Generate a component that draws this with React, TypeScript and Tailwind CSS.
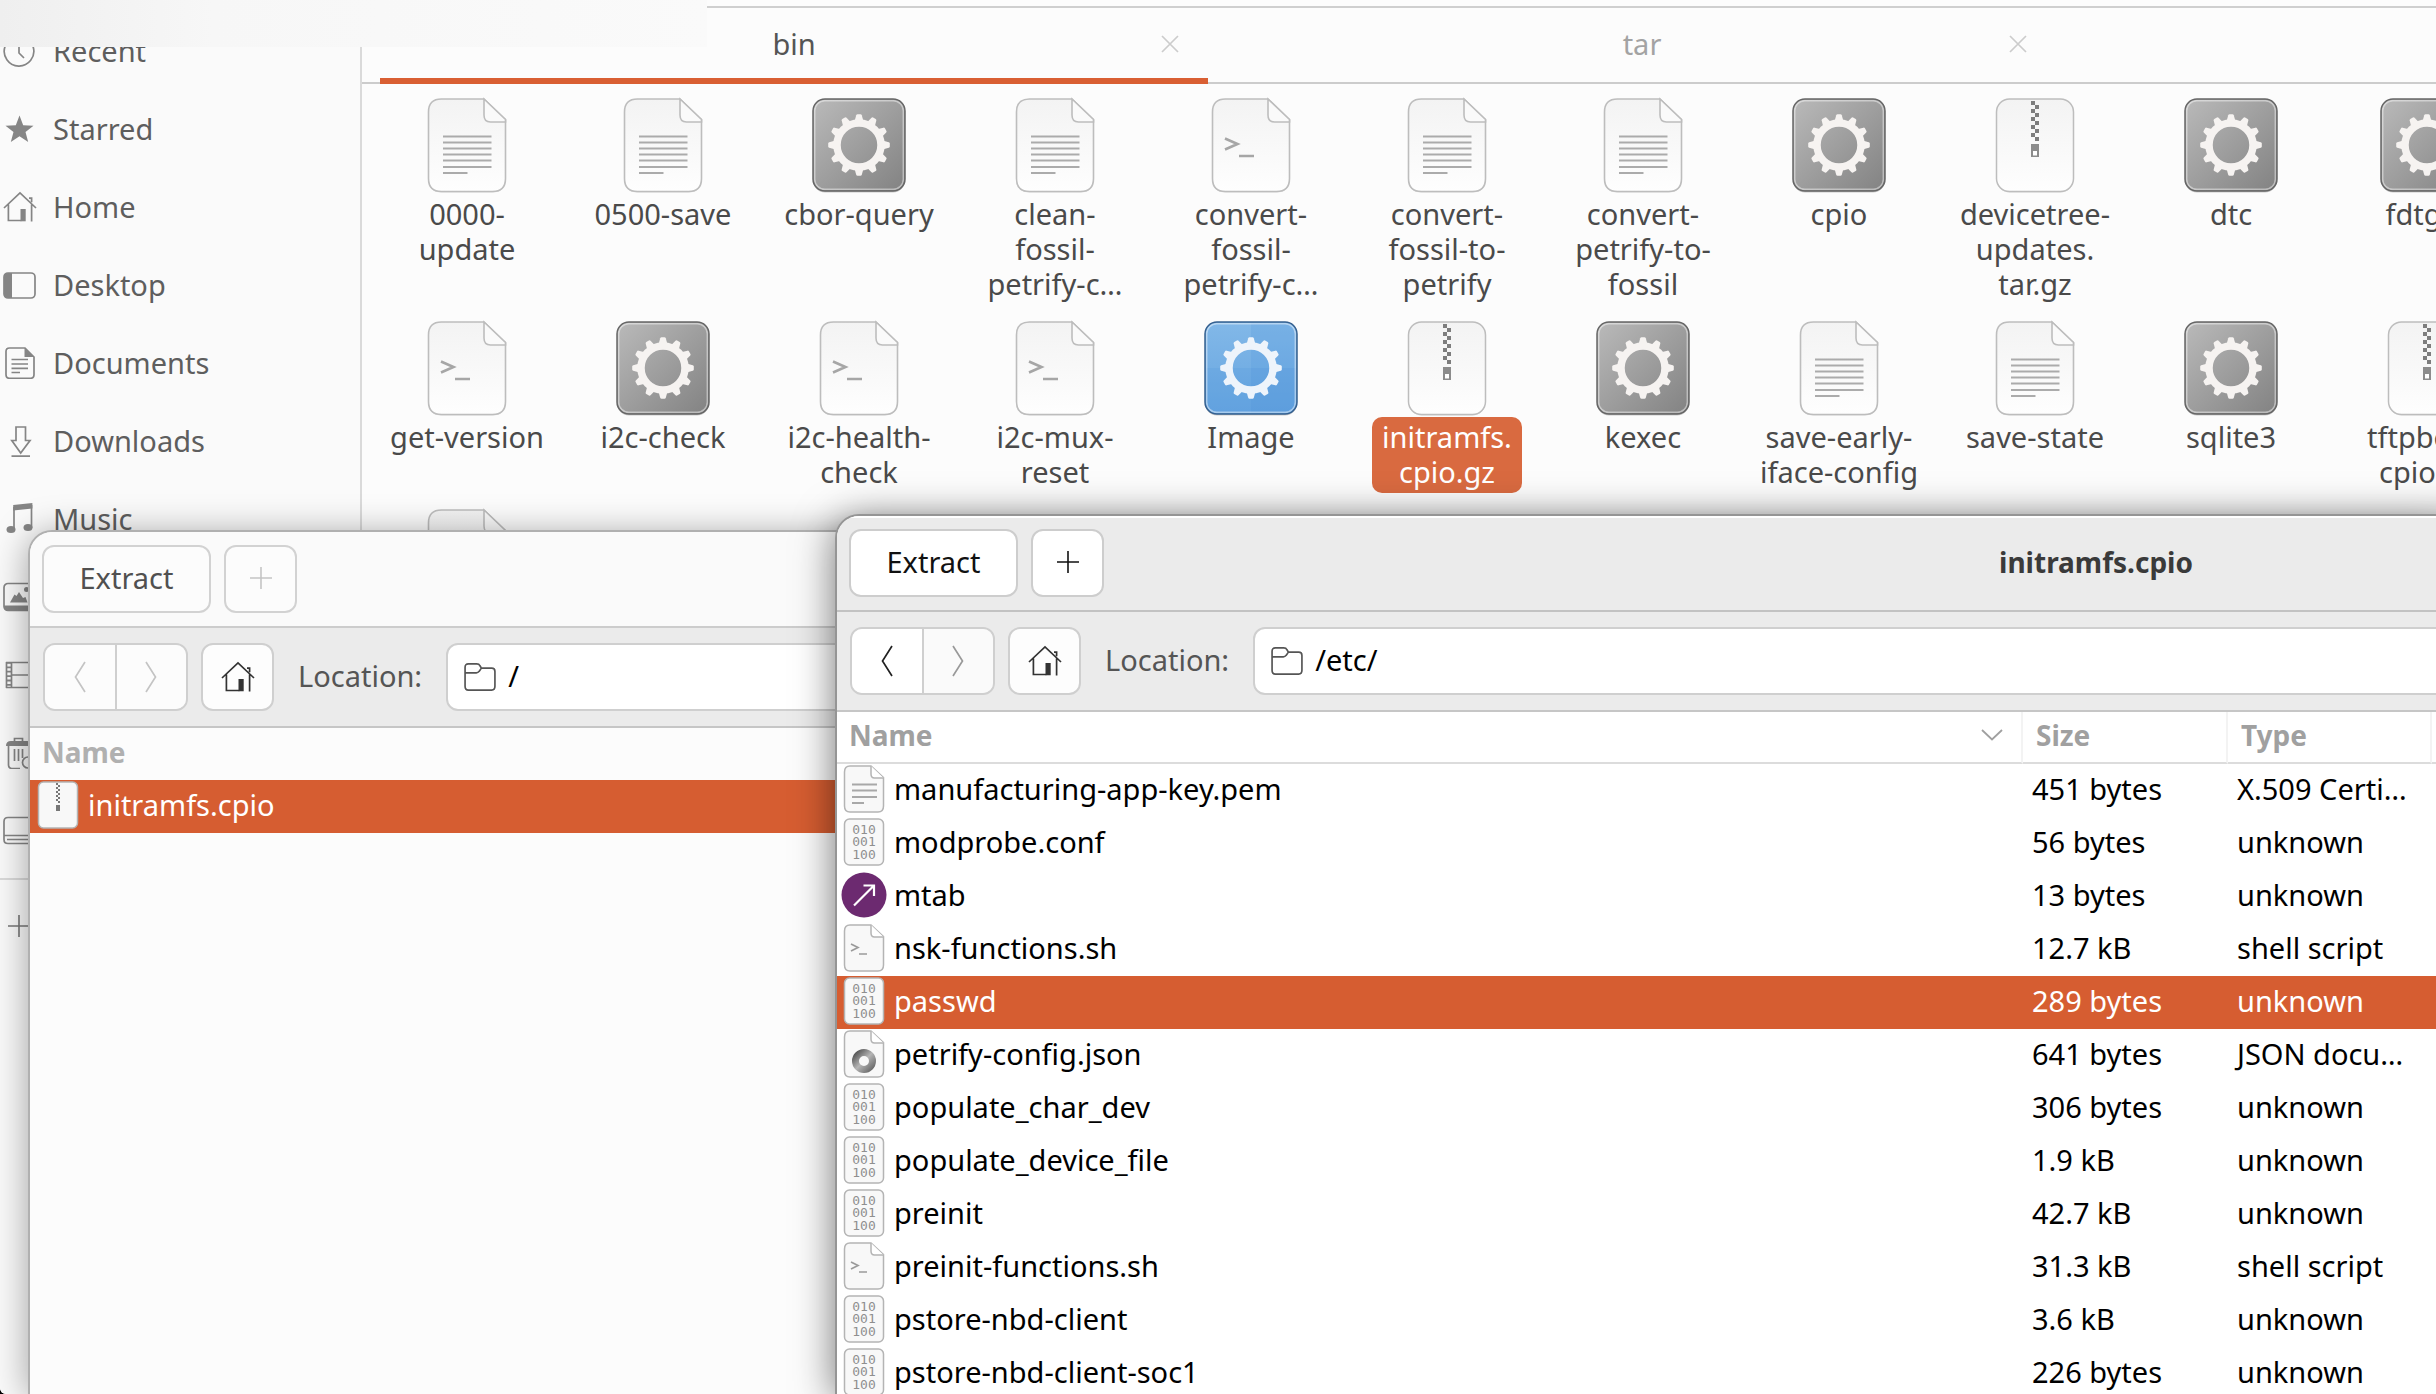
import React from 'react';

type Kind = 'text' | 'shell' | 'zip' | 'exec' | 'image' | 'binary' | 'link' | 'json';

const tiles: { kind: Kind; label: string; selected?: boolean }[] = [
  { kind: 'text', label: '0000-\nupdate' },
  { kind: 'text', label: '0500-save' },
  { kind: 'exec', label: 'cbor-query' },
  { kind: 'text', label: 'clean-\nfossil-\npetrify-c…' },
  { kind: 'shell', label: 'convert-\nfossil-\npetrify-c…' },
  { kind: 'text', label: 'convert-\nfossil-to-\npetrify' },
  { kind: 'text', label: 'convert-\npetrify-to-\nfossil' },
  { kind: 'exec', label: 'cpio' },
  { kind: 'zip', label: 'devicetree-\nupdates.\ntar.gz' },
  { kind: 'exec', label: 'dtc' },
  { kind: 'exec', label: 'fdtget' },
  { kind: 'shell', label: 'get-version' },
  { kind: 'exec', label: 'i2c-check' },
  { kind: 'shell', label: 'i2c-health-\ncheck' },
  { kind: 'shell', label: 'i2c-mux-\nreset' },
  { kind: 'image', label: 'Image' },
  { kind: 'zip', label: 'initramfs.\ncpio.gz', selected: true },
  { kind: 'exec', label: 'kexec' },
  { kind: 'text', label: 'save-early-\niface-config' },
  { kind: 'text', label: 'save-state' },
  { kind: 'exec', label: 'sqlite3' },
  { kind: 'zip', label: 'tftpboot.\ncpio.gz' },
  { kind: 'text', label: '' },
];

const files: { kind: Kind; name: string; size: string; type: string; selected?: boolean }[] = [
  { kind: 'text', name: 'manufacturing-app-key.pem', size: '451 bytes', type: 'X.509 Certi…' },
  { kind: 'binary', name: 'modprobe.conf', size: '56 bytes', type: 'unknown' },
  { kind: 'link', name: 'mtab', size: '13 bytes', type: 'unknown' },
  { kind: 'shell', name: 'nsk-functions.sh', size: '12.7 kB', type: 'shell script' },
  { kind: 'binary', name: 'passwd', size: '289 bytes', type: 'unknown', selected: true },
  { kind: 'json', name: 'petrify-config.json', size: '641 bytes', type: 'JSON docu…' },
  { kind: 'binary', name: 'populate_char_dev', size: '306 bytes', type: 'unknown' },
  { kind: 'binary', name: 'populate_device_file', size: '1.9 kB', type: 'unknown' },
  { kind: 'binary', name: 'preinit', size: '42.7 kB', type: 'unknown' },
  { kind: 'shell', name: 'preinit-functions.sh', size: '31.3 kB', type: 'shell script' },
  { kind: 'binary', name: 'pstore-nbd-client', size: '3.6 kB', type: 'unknown' },
  { kind: 'binary', name: 'pstore-nbd-client-soc1', size: '226 bytes', type: 'unknown' },
];

const HomeIcon = () => (
  <svg viewBox="0 0 34 32" className="h-8 w-[34px] shrink-0" fill="none" stroke="currentColor" strokeWidth="1.7">
    <path d="M1 17 17 1.8 33 17M5.4 13.5v16h13M28.6 13.5V30.4M26 7.2h2.6v4" />
    <path d="M17.5 18h5.2v12.3h-5.2z" fill="currentColor" stroke="none" />
  </svg>
);

const PlusIcon = () => (
  <svg viewBox="0 0 24 24" className="h-6 w-6" stroke="currentColor" strokeWidth="1.6">
    <path d="M1 12h22M12 1v22" />
  </svg>
);

const Chevron = ({ right }: { right?: boolean }) => (
  <svg viewBox="0 0 12 32" className="h-8 w-3" fill="none" stroke="currentColor" strokeWidth="1.7">
    <path d={right ? 'M1 1 10.500 16 1 31' : 'M11 1 1.500 16 11 31'} />
  </svg>
);

const FolderIcon = () => (
  <svg viewBox="0 0 34 30" className="h-7 w-8 shrink-0" fill="none" stroke="currentColor" strokeWidth="1.8">
    <path d="M1 10.500V4.500Q1 1 4.500 1H13.500Q16 1 17 3L18.500 5.500H29.500Q33 5.500 33 9V25Q33 29 29.500 29H4.500Q1 29 1 25ZM1 10.500H13Q15 10.500 16 9L18.500 5.500" />
  </svg>
);

const places: { label: string; shown?: boolean; icon: React.ReactNode }[] = [
  {
    label: 'Recent',
    shown: true,
    icon: <path d="M1 4v7h8M2 11.500A14.800 14.800 0 1 0 8 3.800M16 7v11l5 5" />,
  },
  {
    label: 'Starred',
    shown: true,
    icon: <path d="M16.500 2.500 20.200 12.300 30.500 12.700 22.500 19 25.200 29 16.500 23.300 7.800 29 10.500 19 2.500 12.700 12.800 12.300Z" fill="currentColor" stroke="none" />,
  },
  { label: 'Home', shown: true, icon: null },
  {
    label: 'Desktop',
    shown: true,
    icon: (
      <>
        <rect x="1" y="4" width="31" height="25" rx="4" />
        <path d="M5 4h4v25H5q-4 0-4-4V8q0-4 4-4z" fill="currentColor" stroke="none" />
      </>
    ),
  },
  {
    label: 'Documents',
    shown: true,
    icon: (
      <>
        <path d="M6.500 1H22L31 10V27.500Q31 31.300 27.500 31.300H6.500Q3 31.300 3 27.500V4.500Q3 1 6.500 1Z" />
        <path d="M21.500 1 31 10H21.500Z" fill="currentColor" stroke="none" />
        <path d="M8.500 12.500H25M8.500 17H25M8.500 21.300H25M8.500 25.500H17" />
      </>
    ),
  },
  { label: 'Downloads', shown: true, icon: <path d="M13 2h9.500v13.500H27L17.700 28 8.800 15.500H13ZM8.500 31.200H27" /> },
  {
    label: 'Music',
    shown: true,
    icon: (
      <>
        <path d="M11 26V4M28.500 25V2" />
        <path d="M10.200 2 29.400 0v5.500l-19.200 2z" fill="currentColor" stroke="none" />
        <ellipse cx="8" cy="26.500" rx="4.500" ry="3.500" fill="currentColor" stroke="none" />
        <ellipse cx="25" cy="24.500" rx="4.500" ry="3.500" fill="currentColor" stroke="none" />
      </>
    ),
  },
  {
    label: 'Pictures',
    icon: (
      <>
        <rect x="1" y="2.500" width="32" height="27" rx="4" />
        <path d="M1 24.500h32v2q0 3-4 3H5q-4 0-4-3z" fill="currentColor" stroke="none" />
        <path d="m7 21.500 4.500-8 2 1.500 2.500-4 4 6 2.500-1 2 5.500z" fill="currentColor" stroke="none" />
        <circle cx="23.500" cy="8.500" r="2.500" fill="currentColor" stroke="none" />
      </>
    ),
  },
  {
    label: 'Videos',
    icon: (
      <>
        <path d="M3.500 3v26M8.500 3v26M3 3.500h30M8.500 16H33M3 28.500h30" />
        <path d="M6 3v26" strokeWidth="4.500" strokeDasharray="1.800 2.600" />
      </>
    ),
  },
  {
    label: 'Trash',
    icon: (
      <>
        <path d="M11.500 4.500V1.500h8v3M5.500 9v18.500q0 4 3.500 4h8M11.500 12v12M15.500 12v12M19.500 12v9M26 9v8" />
        <path d="M3 9q0-5 5-5h16q5 0 5 5z" fill="currentColor" stroke="none" />
        <circle cx="25" cy="25.500" r="5.500" />
      </>
    ),
  },
  {
    label: 'Disk',
    icon: (
      <>
        <path d="M5 2.500h24q4 0 4 4v22H5q-4 0-4-4v-18q0-4 4-4z" />
        <path d="M1 20.500h32M4 24.500h29" />
      </>
    ),
  },
];

const gearTeeth = [0, 30, 60, 90, 120, 150, 180, 210, 240, 270, 300, 330];
const zipTeeth = [0, 1, 2, 3, 4, 5, 6, 7, 8, 9];

const SheetDefs = () => (
  <svg className="absolute h-0 w-0" aria-hidden="true">
    <defs>
      <linearGradient id="paper" x1="0" y1="0" x2="0" y2="1">
        <stop offset="0" stopColor="#f3f3f3" />
        <stop offset="1" stopColor="#fefefe" />
      </linearGradient>
      <linearGradient id="steel" x1="0" y1="0" x2="1" y2="1">
        <stop offset="0" stopColor="#bababa" />
        <stop offset="1" stopColor="#828282" />
      </linearGradient>
      <linearGradient id="sky" x1="0" y1="0" x2="0" y2="1">
        <stop offset="0" stopColor="#82b8e8" />
        <stop offset="1" stopColor="#66a5e0" />
      </linearGradient>
      <linearGradient id="torus" x1="0" y1="0" x2="1" y2="1">
        <stop offset="0" stopColor="#555555" />
        <stop offset="0.5" stopColor="#b5b5b5" />
        <stop offset="1" stopColor="#6a6a6a" />
      </linearGradient>
    </defs>
  </svg>
);

const TileIcon = ({ kind }: { kind: Kind }) => {
  if (kind === 'exec' || kind === 'image') {
    const blue = kind === 'image';
    return (
      <svg viewBox="0 0 96 96" className="h-24 w-24">
        <rect x="2" y="3" width="92" height="92.500" rx="12" fill="#000" opacity="0.2" />
        <rect x="2" y="2" width="92" height="92" rx="12" fill={blue ? 'url(#sky)' : 'url(#steel)'} />
        {blue && <path d="M48 3h34q11 0 11 11v34H48zM3 48h45v45H14Q3 93 3 82z" fill="#4f94da" opacity="0.2" />}
        {blue && <path d="M48 48h45v34q0 11-11 11H48z" fill="#4f94da" opacity="0.4" />}
        <rect x="3.700" y="3.700" width="88.600" height="88.600" rx="10" fill="none" stroke="#fff" strokeWidth="1.500" opacity="0.45" />
        <rect x="2" y="2" width="92" height="92" rx="12" fill="none" stroke={blue ? '#35608f' : '#666'} strokeWidth="1.500" />
        <g fill={blue ? '#eef4fb' : '#f6f3f1'}>
          <circle cx="48" cy="48" r="22" fill="none" stroke={blue ? '#eef4fb' : '#f6f3f1'} strokeWidth="7.500" />
          {gearTeeth.map((angle) => (
            <path key={angle} d="M43.500 24.500 45.200 18.200Q45.500 17.200 46.500 17.200H49.500Q50.500 17.200 50.800 18.200L52.500 24.500Z" transform={`rotate(${angle} 48 48)`} />
          ))}
        </g>
      </svg>
    );
  }
  if (kind === 'zip') {
    return (
      <svg viewBox="0 0 96 96" className="h-24 w-24">
        <rect x="9.500" y="3" width="77" height="92.500" rx="13" fill="#000" opacity="0.12" />
        <rect x="9.500" y="2" width="77" height="92.500" rx="13" fill="url(#paper)" stroke="#bdbdbd" strokeWidth="1.500" />
        {zipTeeth.map((i) => (
          <rect key={i} x={i % 2 ? 48 : 44} y={4 + i * 4} width="4" height="4" fill="#7d7d7d" />
        ))}
        <path d="M44 47h8v13h-8z" fill="#8c8c8c" />
        <path d="M46 54h4v4.500h-4z" fill="#fff" />
      </svg>
    );
  }
  return (
    <svg viewBox="0 0 96 96" className="h-24 w-24" fill="none" stroke="#bdbdbd" strokeWidth="1.600">
      <path d="M22.500 3H65L86.500 23V82.500Q86.500 95.500 73.500 95.500H22.500Q9.500 95.500 9.500 82.500V16Q9.500 3 22.500 3Z" fill="#000" stroke="none" opacity="0.12" />
      <path d="M22.500 2H65L86.500 22.500V81.500Q86.500 94.500 73.500 94.500H22.500Q9.500 94.500 9.500 81.500V15Q9.500 2 22.500 2Z" fill="url(#paper)" />
      <path d="M65 2V18Q65 25 71.500 25H86.500V22.500Z" fill="#fafafa" />
      {kind === 'text' ? (
        <path d="M24 39.500H72.500M24 45.500H72.500M24 51.500H72.500M24 57.500H72.500M24 63.500H72.500M24 70H72.500M24 76H48.500" stroke="#ababab" strokeWidth="2" />
      ) : (
        <path d="M22 41.500 34.500 47 22 52.500M36 59H51" stroke="#a6a6a6" strokeWidth="2.600" />
      )}
    </svg>
  );
};

const ListIcon = ({ kind }: { kind: Kind }) => {
  if (kind === 'link') {
    return (
      <svg viewBox="0 0 48 48" className="h-12 w-12 shrink-0">
        <circle cx="24" cy="24" r="22.500" fill="#6c2a70" />
        <path d="M14 34.500 34 14.500M23.500 14.500H34V25" fill="none" stroke="#fff" strokeWidth="2.200" />
      </svg>
    );
  }
  const folded = kind === 'text' || kind === 'shell' || kind === 'json';
  return (
    <svg viewBox="0 0 48 48" className="h-12 w-12 shrink-0" fill="none" stroke="#b4b4b4" strokeWidth="1.500">
      {folded ? (
        <>
          <path d="M10 1H31L43.500 12.500V41Q43.500 47 38 47H10Q4.500 47 4.500 41V7Q4.500 1 10 1Z" fill="#f8f8f8" />
          <path d="M31 1V9Q31 13 34.500 13H43.500" fill="#fff" />
        </>
      ) : (
        <rect x="4.500" y="1" width="39" height="46" rx="5" fill="#f8f8f8" />
      )}
      {kind === 'text' && <path d="M12 19.500H37M12 25.500H37M12 32H37M12 38H24" stroke="#a8a8a8" strokeWidth="1.800" />}
      {kind === 'shell' && <path d="M11 20 18 23.500 11 27M19 30H27" stroke="#9a9a9a" strokeWidth="1.700" />}
      {kind === 'json' && <circle cx="24" cy="31" r="8.500" stroke="url(#torus)" strokeWidth="7" />}
      {kind === 'zip' && (
        <g fill="#777" stroke="none">
          {zipTeeth.map((i) => (
            <rect key={i} x={i % 2 ? 24 : 22} y={2 + i * 2} width="2" height="2" />
          ))}
          <rect x="22" y="24" width="4" height="6" />
        </g>
      )}
      {kind === 'binary' && (
        <g fill="#8f8f8f" stroke="none" fontFamily="DejaVu Sans Mono, monospace" fontSize="13" textAnchor="middle">
          <text x="24" y="16">010</text>
          <text x="24" y="28">001</text>
          <text x="24" y="41">100</text>
        </g>
      )}
    </svg>
  );
};

const Sidebar = () => (
  <nav className="w-[362px] shrink-0 border-r-2 border-[#dadada] bg-[#fafafa] pt-3 text-[#5e5e5e]">
    {places.map((place) => (
      <a key={place.label} href="#" aria-label={place.label} className="flex h-[78px] items-center gap-4 pl-[3px]">
        <span className="text-[#858585]">
          {place.icon ? (
            <svg viewBox="0 0 34 32" className="h-8 w-[34px]" fill="none" stroke="currentColor" strokeWidth="1.700">
              {place.icon}
            </svg>
          ) : (
            <HomeIcon />
          )}
        </span>
        {place.shown && place.label}
      </a>
    ))}
    <div className="mt-2 border-t-2 border-[#dadada] pt-[7px]">
      <a href="#" aria-label="Other Locations" className="flex h-[78px] items-center pl-[7px] text-[#777777]">
        <PlusIcon />
      </a>
    </div>
  </nav>
);

const Tab = ({ title, active }: { title: string; active?: boolean }) => (
  <div className={active
    ? 'relative flex h-[76px] w-[828px] items-center justify-center border-b-[6px] border-[#d95f33] pt-0.5 text-[#555555]'
    : 'relative flex h-[76px] w-[828px] items-center justify-center border-b-[6px] border-transparent pt-0.5 text-[#a3a3a3]'}
  >
    <button type="button">{title}</button>
    <button type="button" aria-label={`Close ${title}`} className="absolute right-7 text-[#cccccc]">
      <svg viewBox="0 0 20 20" className="h-5 w-5" stroke="currentColor" strokeWidth="1.700">
        <path d="M2 2 18 18M18 2 2 18" />
      </svg>
    </button>
  </div>
);

const FileManager = () => (
  <div className="flex h-full">
    <Sidebar />
    <main className="min-w-0 flex-1 overflow-hidden pt-[6px]">
      <div className="flex h-[78px] gap-5 border-t-2 border-[#cfcfcf] pl-[18px] shadow-[inset_0_-2px_0_#cccccc]">
        <Tab title="bin" active />
        <Tab title="tar" />
      </div>
      <div className="grid grid-cols-[repeat(11,196px)] gap-y-[15px] pt-[13px] pl-[7px] leading-[35px] text-[#4a4a4a]">
        {tiles.map((tile, index) => (
          <button key={index} type="button" aria-label={tile.label || 'file'} className="flex flex-col items-center gap-px">
            <TileIcon kind={tile.kind} />
            <span className={tile.selected
              ? 'rounded-[10px] bg-[#d96a40] px-[10px] pt-0.5 pb-1 whitespace-pre-line text-white'
              : 'px-[10px] pt-0.5 pb-1 whitespace-pre-line'}
            >
              {tile.label}
            </span>
          </button>
        ))}
      </div>
    </main>
  </div>
);

const WindowHeader = ({ title, focused }: { title?: string; focused?: boolean }) => {
  const button = focused
    ? 'flex h-[68px] items-center justify-center rounded-xl border-2 border-[#cdcdcd] bg-white pb-0.5 text-[#111111]'
    : 'flex h-[68px] items-center justify-center rounded-xl border-2 border-[#d2d2d2] bg-[#fcfcfc] pb-0.5 text-[#505050]';
  return (
    <header className={focused
      ? 'relative flex h-24 items-center gap-[13px] border-b-2 border-[#c2c2c2] bg-[#ebebeb] pl-3 shadow-[inset_0_2px_0_#ffffff]'
      : 'relative flex h-24 items-center gap-[13px] border-b-2 border-[#cccccc] bg-[#fafafa] pl-3'}
    >
      <button type="button" className={`${button} w-[169px]`}>Extract</button>
      <button type="button" aria-label="Add files" className={`${button} w-[73px]`}>
        <span className={focused ? 'text-[#111111]' : 'text-[#c4c4c4]'}><PlusIcon /></span>
      </button>
      {title && <h1 className="pointer-events-none absolute inset-x-0 pb-0.5 text-center text-[28px] font-bold text-[#3a3a3a]">{title}</h1>}
    </header>
  );
};

const LocationBar = ({ id, path, focused }: { id: string; path: string; focused?: boolean }) => (
  <div className="flex h-[100px] items-center gap-[13px] border-b-2 border-[#c6c6c6] bg-[#ebebeb] pl-[13px]">
    <div className="flex h-[68px] w-[145px] shrink-0 overflow-hidden rounded-xl border-2 border-[#cfcfcf]">
      <button type="button" aria-label="Back" className={focused
        ? 'flex flex-1 items-center justify-center border-r-2 border-[#cfcfcf] bg-white text-[#222222]'
        : 'flex flex-1 items-center justify-center border-r-2 border-[#cfcfcf] bg-[#fcfcfc] text-[#c4c4c4]'}
      >
        <Chevron />
      </button>
      <button type="button" aria-label="Forward" className={focused
        ? 'flex flex-1 items-center justify-center bg-[#fafafa] text-[#999999]'
        : 'flex flex-1 items-center justify-center bg-[#fcfcfc] text-[#c4c4c4]'}
      >
        <Chevron right />
      </button>
    </div>
    <button type="button" aria-label="Home" className="flex h-[68px] w-[73px] shrink-0 items-center justify-center rounded-xl border-2 border-[#cfcfcf] bg-[#fdfdfd] text-[#333333]">
      <HomeIcon />
    </button>
    <label htmlFor={id} className="px-[11px] pb-0.5 text-[#555555]">Location:</label>
    <div className="flex h-[68px] flex-1 items-center gap-3 rounded-xl border-2 border-[#cfcfcf] bg-white pl-4 text-[#555555]">
      <FolderIcon />
      <input id={id} defaultValue={path} className="min-w-0 flex-1 bg-transparent pb-0.5 text-black outline-none" />
    </div>
  </div>
);

const NameCell = ({ kind, name }: { kind: Kind; name: string }) => (
  <div className="flex items-center gap-[6px]">
    <ListIcon kind={kind} />
    {name}
  </div>
);

const CpioGzWindow = () => (
  <section className="absolute top-[530px] right-0 bottom-0 left-[28px] overflow-hidden rounded-tl-[24px] border-t-2 border-l-2 border-[#b0b0b0] bg-[#fcfcfc] shadow-[0_4px_36px_rgba(0,0,0,0.36)]">
    <WindowHeader />
    <LocationBar id="location-gz" path="/" />
    <table className="w-full table-fixed text-left">
      <thead>
        <tr className="h-[52px] text-[28px] text-[#b0b0b0]">
          <th className="p-0 pb-1 pl-3">Name</th>
        </tr>
      </thead>
      <tbody>
        <tr className="h-[53px] bg-[#d65d31] text-white">
          <td className="p-0 pb-1 pl-1"><NameCell kind="zip" name="initramfs.cpio" /></td>
        </tr>
      </tbody>
    </table>
  </section>
);

// The window runs past the right edge of the screen, so its centred title sits right of centre.
const CpioWindow = () => (
  <section className="absolute top-[514px] -right-[919px] bottom-0 left-[835px] overflow-hidden rounded-tl-[24px] border-t-2 border-l-2 border-[#959595] bg-white shadow-[0_6px_40px_rgba(0,0,0,0.55)]">
    <WindowHeader title="initramfs.cpio" focused />
    <LocationBar id="location-cpio" path="/etc/" focused />
    <table className="w-full table-fixed border-separate border-spacing-0 text-left">
      <colgroup>
        <col className="w-[1186px]" />
        <col className="w-[205px]" />
        <col className="w-[204px]" />
        <col />
      </colgroup>
      <thead>
        <tr className="h-[52px] text-[28px] text-[#a0a0a0]">
          <th className="border-r-2 border-b-2 border-r-[#f3f3f3] border-b-[#dcdcdc] p-0 pl-3">
            <div className="flex items-center justify-between pr-[18px] pb-1">
              Name
              <svg viewBox="0 0 22 12" className="h-3 w-[22px]" fill="none" stroke="currentColor" strokeWidth="1.800">
                <path d="M1 1 11 10.500 21 1" />
              </svg>
            </div>
          </th>
          <th className="border-r-2 border-b-2 border-r-[#f3f3f3] border-b-[#dcdcdc] p-0 pb-1 pl-[13px]">Size</th>
          <th className="border-r-2 border-b-2 border-r-[#f3f3f3] border-b-[#dcdcdc] p-0 pb-1 pl-[13px]">Type</th>
          <th className="border-b-2 border-[#dcdcdc] p-0" />
        </tr>
      </thead>
      <tbody>
        {files.map((file) => (
          <tr key={file.name} className={file.selected ? 'h-[53px] bg-[#d65d31] text-white' : 'h-[53px] text-black'}>
            <td className="p-0 pb-1 pl-[3px]"><NameCell kind={file.kind} name={file.name} /></td>
            <td className="p-0 pb-1 pl-[9px]">{file.size}</td>
            <td className="p-0 pb-1 pl-[9px]">{file.type}</td>
            <td className="p-0" />
          </tr>
        ))}
      </tbody>
    </table>
  </section>
);

const App = () => {
  return (
    <div className="h-screen bg-black">
      <SheetDefs />
      <div className="relative h-full overflow-hidden rounded-bl-[6px] bg-[#fcfcfc] font-['Noto_Sans',sans-serif] text-[29px] leading-[40px]">
        <FileManager />
        <div className="absolute top-0 left-0 h-[47px] w-[707px] bg-linear-to-r from-[#efefef] via-[#f7f7f7] via-30% to-[#fafafa]" />
        <CpioGzWindow />
        <CpioWindow />
      </div>
    </div>
  );
};

export default App;
